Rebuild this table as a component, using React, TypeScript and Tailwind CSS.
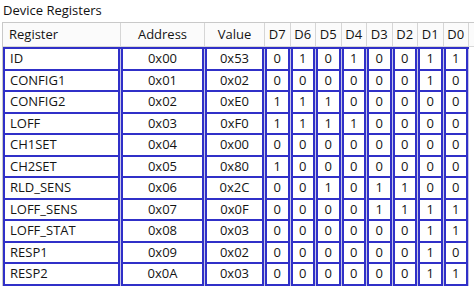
import React from "react";

const rows: [string, string, number][] = [
  ["ID", "0x00", 0x53],
  ["CONFIG1", "0x01", 0x02],
  ["CONFIG2", "0x02", 0xe0],
  ["LOFF", "0x03", 0xf0],
  ["CH1SET", "0x04", 0x00],
  ["CH2SET", "0x05", 0x80],
  ["RLD_SENS", "0x06", 0x2c],
  ["LOFF_SENS", "0x07", 0x0f],
  ["LOFF_STAT", "0x08", 0x03],
  ["RESP1", "0x09", 0x02],
  ["RESP2", "0x0A", 0x03],
];

const hex = (v: number) => "0x" + v.toString(16).toUpperCase().padStart(2, "0");

const bitCols = ["D7", "D6", "D5", "D4", "D3", "D2", "D1", "D0"];

function Cell({ w, children, left }: { w: string; children: React.ReactNode; left?: boolean }) {
  return (
    <div className={`${w} flex-none h-full border-r border-[#c4c4e6]`}>
      <div
        className={`h-full border-l-2 border-r-2 border-b-2 border-[#3030c8] bg-white flex items-center ${
          left ? "justify-start pl-[5px]" : "justify-center"
        }`}
      >
        {children}
      </div>
    </div>
  );
}

export default function App() {
  return (
    <div
      className="w-[474px] h-[287px] overflow-hidden bg-white text-[13px] text-[#141414]"
      style={{ fontFamily: '"Open Sans", "Noto Sans", sans-serif' }}
    >
      <div className="h-[22px] pl-[3px] flex items-center text-[13px] text-[#111]">Device Registers</div>
      <div className="ml-[2px] border-l border-t border-[#c9c9c9] flex flex-col">
        <div className="flex h-[24px] bg-[#fbfbfb] border-b border-[#d8d8d8]">
          <div className="w-[118px] flex-none border-r border-[#d6d6d6] flex items-center pl-[6px]">Register</div>
          <div className="w-[84px] flex-none border-r border-[#d6d6d6] flex items-center justify-center">Address</div>
          <div className="w-[60px] flex-none border-r border-[#d6d6d6] flex items-center justify-center">Value</div>
          {bitCols.map((b) => (
            <div key={b} className="w-[25.5px] flex-none border-r border-[#d6d6d6] flex items-center justify-center">
              {b}
            </div>
          ))}
        </div>
        <div className="flex flex-col border-t-2 border-[#3030c8] w-[466px]">
          {rows.map(([name, addr, val]) => (
            <div key={name} className="flex h-[21.5px]">
              <Cell w="w-[118px]" left>
                {name}
              </Cell>
              <Cell w="w-[84px]">{addr}</Cell>
              <Cell w="w-[60px]">{hex(val)}</Cell>
              {bitCols.map((b, i) => (
                <Cell key={b} w="w-[25.5px]">
                  {(val >> (7 - i)) & 1}
                </Cell>
              ))}
            </div>
          ))}
        </div>
      </div>
    </div>
  );
}
